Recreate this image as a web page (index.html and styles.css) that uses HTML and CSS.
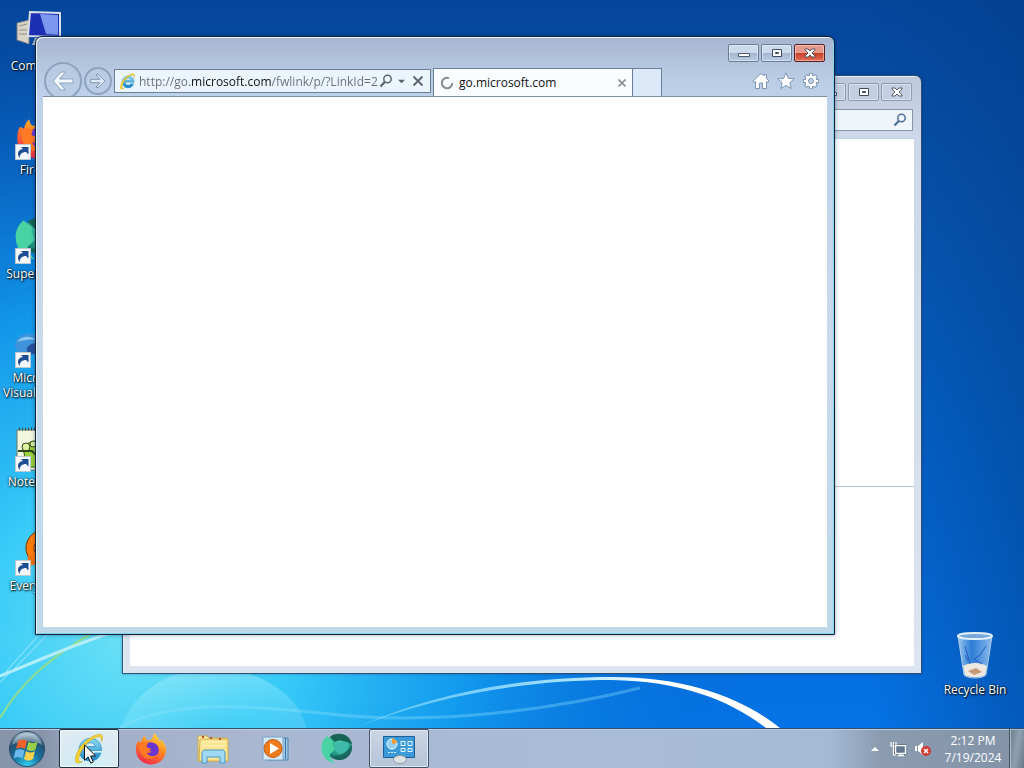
FILE: index.html
```
<!DOCTYPE html>
<html lang="en">
<head>
    <meta charset="UTF-8">
    <meta name="viewport" content="width=device-width, initial-scale=1.0">
    <title>Desktop</title>
    <link rel="stylesheet" href="styles.css">
</head>
<body>

<!-- Shared icons and gradients -->
<svg class="defs" width="0" height="0" aria-hidden="true">
    <defs>
        <linearGradient id="ie-blue" x1="0" y1="0" x2="0" y2="1">
            <stop offset="0" stop-color="#8fdcf6"/>
            <stop offset="1" stop-color="#1781c4"/>
        </linearGradient>
        <linearGradient id="fox-fire" x1="0.8" y1="0" x2="0.3" y2="1">
            <stop offset="0" stop-color="#ffe14a"/>
            <stop offset="0.45" stop-color="#ff8a1f"/>
            <stop offset="1" stop-color="#f0284f"/>
        </linearGradient>
        <radialGradient id="teal" cx="0.5" cy="0.35" r="0.7">
            <stop offset="0" stop-color="#4fd8b4"/>
            <stop offset="1" stop-color="#0b7065"/>
        </radialGradient>
        <radialGradient id="orb" cx="0.5" cy="1" r="0.95">
            <stop offset="0" stop-color="#33d4f4"/>
            <stop offset="0.45" stop-color="#17719f"/>
            <stop offset="0.8" stop-color="#24506f"/>
            <stop offset="1" stop-color="#9fb9c9"/>
        </radialGradient>
        <linearGradient id="folder" x1="0" y1="0" x2="0" y2="1">
            <stop offset="0" stop-color="#fdf3b4"/>
            <stop offset="1" stop-color="#eccf6a"/>
        </linearGradient>
        <linearGradient id="glass" x1="0" y1="0" x2="1" y2="0">
            <stop offset="0" stop-color="#bcdcf5" stop-opacity="0.85"/>
            <stop offset="0.4" stop-color="#4c93e6" stop-opacity="0.6"/>
            <stop offset="1" stop-color="#b3d6f6" stop-opacity="0.8"/>
        </linearGradient>
    </defs>
    <symbol id="ie" viewBox="0 0 32 32">
        <path d="M28.500 17.500H12c.3 3 2 5 5 5 2 0 3.500-1 4.300-2.500h6.600C26.300 25 22.500 28 17.300 28 10.700 28 6 23.500 6 17S10.700 5.500 17.300 5.500C24 5.500 28.800 10 28.500 17.500zM12.200 13.500h10c-.4-2.300-2.200-3.700-4.700-3.700s-4.700 1.500-5.300 3.700z" fill="url(#ie-blue)" stroke="#2a8ec2" stroke-width="0.700"/>
        <path d="M28.500 8.500C30.500 4 30 1.300 26 1.500 20 2 11 8 6 16c-4 6.500-5 12.500-2 14 1.500.5 3.500-.2 5.500-1.500-2 .5-3.500.2-3.700-1.500C5.300 22.500 9.500 15 15 9.500 20 5 25.500 3 27.300 4c1 .7 1 2.200 1.200 4.500z" fill="#f7d22e" stroke="#c79d17" stroke-width="0.500"/>
    </symbol>
    <symbol id="firefox" viewBox="0 0 32 32">
        <path d="M3 8l3 1.500C6.500 6 8 4 10 2.500c0 2 .7 3.500 2 4.500l3 .5C17 6 18.500 4 18.500 0c3 2 5 4.500 6 8l2-1c3.500 3.500 5 7 4.500 11-.7 8-7 13.500-15 13.500S1.500 25.500 1 18C.8 14 1.200 10.500 3 8z" fill="url(#fox-fire)"/>
        <path d="M12 10c3-1.500 7-1 10 2 3 3.500 2 9-1.500 11-4 2-9 .5-10-4 2 1.500 5 1.300 6-.5-2-.3-4-1.500-4.500-3-1.500-.5-2-3 0-5.500z" fill="#6a35cf"/>
        <path d="M4 12c2-4 7-3 9-1.500-1 1-2 3-1 4 2 .3 4 1 4 2-1 1-3 1-4 2.500 0 4 6 5.500 10 2.500-2 5-9 6-13 2.500-4-3-5-8-5-12z" fill="#ff7a22"/>
    </symbol>
    <symbol id="supermium" viewBox="0 0 32 32">
        <circle cx="18" cy="14" r="13" fill="url(#teal)"/>
        <path d="M9 4C13 0 22-.5 27 4c2 2 3.500 4 4 7l-7-2c-3-2-7-2-10 0z" fill="#176455"/>
        <path d="M6 3C1 7-.5 13 1 19c1.500 6 6 10 13 11-4-3-5.500-6-5-9 2-2 4-3 5-5-2-3-3-5-2-8z" fill="#49d3a5"/>
        <path d="M14 15c-1-5 2-7 5-5 3-2 8-2 9 1 0 6-4 10-9 10-3-1-5-3-5-6z" fill="#3fb9a9"/>
        <path d="M9 21c4 3 10 2 14-1 3-2 6-5 8-8 1 8-4 14-11 15-5 0-9-2-11-6z" fill="#17544f" opacity="0.600"/>
    </symbol>
    <symbol id="magnifier" viewBox="0 0 14 14">
        <circle cx="8.500" cy="5" r="3.700" fill="none" stroke="currentColor" stroke-width="1.500"/>
        <path d="M5.700 8L1.500 12.500" stroke="currentColor" stroke-width="2.300"/>
    </symbol>
    <symbol id="shortcut" viewBox="0 0 16 16">
        <path d="M0.500 0.500h15v15h-15z" fill="#f4f8fb" stroke="#b9c8d4"/>
        <path d="M4.500 14C1.500 9 3.500 5.500 8 5L6 3h7.500v7.500L11 8c-4 0-6 2-6.500 6z" fill="#1c4c94"/>
    </symbol>
    <symbol id="win-min" viewBox="0 0 12 10">
        <path d="M0.500 5.500h11v3h-11z" fill="#fff" stroke="#4c5a70"/>
    </symbol>
    <symbol id="win-max" viewBox="0 0 12 10">
        <path d="M1.500 1.500h9v7h-9zM4.500 4.500h3v1h-3z" fill="#fff" stroke="#3e4c63"/>
    </symbol>
    <symbol id="win-close" viewBox="0 0 12 10">
        <path d="M1 1h3l2 2 2-2h3v1L8 5l3 3v1H8L6 7 4 9H1V8l3-3-3-3z" fill="#fff" stroke="#4a4a5a" stroke-width="0.900"/>
    </symbol>
</svg>

<div class="screen">

    <main class="desktop">
        <svg class="wallpaper" viewBox="0 0 1024 728" preserveAspectRatio="none" aria-hidden="true">
            <defs>
                <linearGradient id="sky" x1="0" y1="0" x2="0" y2="1">
                    <stop offset="0" stop-color="#04469b"/>
                    <stop offset="0.300" stop-color="#0654b0"/>
                    <stop offset="0.600" stop-color="#0462c8"/>
                    <stop offset="1" stop-color="#0573e6"/>
                </linearGradient>
                <radialGradient id="glow" gradientUnits="userSpaceOnUse" cx="130" cy="640" r="620">
                    <stop offset="0" stop-color="#6be0f5"/>
                    <stop offset="0.250" stop-color="#38cbf8"/>
                    <stop offset="0.550" stop-color="#129cee" stop-opacity="0.900"/>
                    <stop offset="1" stop-color="#0764cd" stop-opacity="0"/>
                </radialGradient>
                <linearGradient id="edge" x1="0" y1="0" x2="1" y2="0">
                    <stop offset="0.850" stop-color="#033c86" stop-opacity="0"/>
                    <stop offset="1" stop-color="#033c86" stop-opacity="0.450"/>
                </linearGradient>
                <linearGradient id="streak" x1="0" y1="0" x2="1" y2="0">
                    <stop offset="0" stop-color="#9fe6ff" stop-opacity="0.400"/>
                    <stop offset="0.500" stop-color="#a8e4ff"/>
                    <stop offset="0.700" stop-color="#ffffff"/>
                </linearGradient>
                <radialGradient id="bubble" cx="0.5" cy="1" r="1">
                    <stop offset="0" stop-color="#c4f6fb" stop-opacity="0"/>
                    <stop offset="1" stop-color="#c4f6fb" stop-opacity="0.350"/>
                </radialGradient>
            </defs>
            <rect width="1024" height="728" fill="url(#sky)"/>
            <rect width="1024" height="728" fill="url(#glow)"/>
            <rect width="1024" height="728" fill="url(#edge)"/>
            <path d="M120 728C135 690 170 668 215 668C260 670 300 695 306 728z" fill="url(#bubble)"/>
            <path d="M120 728C170 698 260 706 330 714C440 726 560 708 640 688" fill="none" stroke="#8fe3fb" stroke-width="3" opacity="0.350"/>
            <path d="M358 727C440 690 530 677 612 677C690 677 745 700 780 728L766 728C730 700 680 681 612 680C530 680 440 694 358 727z" fill="url(#streak)"/>
            <path d="M0 718C20 684 50 656 98 630" fill="none" stroke="#8fdc8c" stroke-width="2"/>
            <path d="M0 676C40 660 65 648 110 633" fill="none" stroke="#b3eefa" stroke-width="3"/>
            <path d="M0 682C20 664 34 648 48 634M4 674l34-38" fill="none" stroke="#a6e7fa" stroke-width="1"/>
        </svg>

        <ul class="icons">
            <li class="icon">
                <svg class="picture" viewBox="0 0 48 48">
                    <path d="M2 15l12-3v24L2 32z" fill="#d9d5c6" stroke="#777c80"/>
                    <path d="M4 18l8-2M4 22h8M4 26h8" stroke="#8e8d86"/>
                    <path d="M15 4l30 1v24l-32-1z" fill="#1d2fb5" stroke="#d7dfea" stroke-width="2"/>
                    <path d="M25 6l18 1v20l-12-1z" fill="#7b98ee"/>
                    <path d="M20 30h16l2 7H17z" fill="#b9c3c9"/>
                </svg>
                <span>Computer</span>
            </li>
            <li class="icon">
                <svg class="picture" viewBox="0 0 48 48">
                    <use href="#firefox" x="1" y="4" width="43" height="43"/>
                    <use href="#shortcut" x="0" y="32" width="16" height="16"/>
                </svg>
                <span>Firefox</span>
            </li>
            <li class="icon">
                <svg class="picture" viewBox="0 0 48 48">
                    <use href="#supermium" x="0" y="0" width="46" height="46"/>
                    <use href="#shortcut" x="0" y="32" width="16" height="16"/>
                </svg>
                <span>Supermium</span>
            </li>
            <li class="icon">
                <svg class="picture" viewBox="0 0 48 48">
                    <path d="M0 26c0-9 8-13 16-12s14 5 14 12l-14 8-12 2z" fill="#3f93da"/>
                    <path d="M2 22c4-6 14-7 19-2-6-1-12 0-19 2z" fill="#8cc8f0"/>
                    <path d="M12 28c2-4 8-6 14-4v10H12z" fill="#28519c"/>
                    <use href="#shortcut" x="0" y="32" width="16" height="16"/>
                </svg>
                <span>Microsoft Visual Studio</span>
            </li>
            <li class="icon">
                <svg class="picture" viewBox="0 0 48 48">
                    <path d="M2 6h40v40H2z" fill="#f2f7de" stroke="#6e785a"/>
                    <path d="M4 5h36" stroke="#3d4b4e" stroke-width="3" stroke-dasharray="1 2"/>
                    <path d="M8 24c3-5 8-6 12-7l14 6v20H12z" fill="#9bd13b" stroke="#3a5a17" stroke-width="1"/>
                    <circle cx="11" cy="23" r="4" fill="#dff0a0" stroke="#34491c" stroke-width="1"/>
                    <circle cx="18" cy="20" r="3" fill="#dff0a0" stroke="#34491c" stroke-width="1"/>
                    <path d="M3 27h14l4 4" fill="none" stroke="#2d451b" stroke-width="2"/>
                    <use href="#shortcut" x="0" y="32" width="16" height="16"/>
                </svg>
                <span>Notepad++</span>
            </li>
            <li class="icon">
                <svg class="picture" viewBox="0 0 48 48">
                    <circle cx="29" cy="20" r="18" fill="#ff7d0a" stroke="#7a3506" stroke-width="1"/>
                    <path d="M14 27l-4 12 12-3z" fill="#f3700a"/>
                    <circle cx="29" cy="20" r="10" fill="#ffe1b8" stroke="#7a3506"/>
                    <use href="#shortcut" x="0" y="32" width="16" height="16"/>
                </svg>
                <span>Everything</span>
            </li>
            <li class="icon bin">
                <svg class="picture" viewBox="0 0 48 48">
                    <path d="M7 4l6 39c4 4 18 4 22 0l6-39z" fill="url(#glass)" stroke="#a9c9e8"/>
                    <path d="M12 34c6-4 18-4 24 0l-2 9c-4 3-16 3-20 0z" fill="#eee9e0"/>
                    <path d="M17 39l8-3 6 4-8 3z" fill="#c99a78"/>
                    <path d="M14 14l5 18M35 14l-6 9-6 4 8 5M17 29l-3-6" fill="none" stroke="#2459bd" stroke-width="1"/>
                    <ellipse cx="24" cy="4" rx="17" ry="3" fill="#77a7dc" stroke="#e2f0fa" stroke-width="2"/>
                </svg>
                <span>Recycle Bin</span>
            </li>
        </ul>

        <!-- Background window -->
        <section class="window back-window" aria-label="Control Panel">
            <div class="caption">
                <button type="button" class="win-btn" aria-label="Minimize"><svg><use href="#win-min"/></svg></button>
                <button type="button" class="win-btn" aria-label="Maximize"><svg><use href="#win-max"/></svg></button>
                <button type="button" class="win-btn" aria-label="Close"><svg><use href="#win-close"/></svg></button>
            </div>
            <div class="search-row">
                <div class="search">
                    <input type="text" aria-label="Search">
                    <svg><use href="#magnifier"/></svg>
                </div>
            </div>
            <div class="client panes">
                <div class="pane-top"></div>
                <div class="pane-bottom"></div>
            </div>
        </section>

        <!-- Browser window -->
        <section class="window browser" aria-label="Browser">
            <div class="caption">
                <button type="button" class="win-btn" aria-label="Minimize"><svg><use href="#win-min"/></svg></button>
                <button type="button" class="win-btn" aria-label="Maximize"><svg><use href="#win-max"/></svg></button>
                <button type="button" class="win-btn close" aria-label="Close"><svg><use href="#win-close"/></svg></button>
            </div>
            <div class="toolbar">
                <button type="button" class="round back" aria-label="Back">
                    <svg viewBox="0 0 24 24"><path d="M10 3h4.500L8.500 10H22v4H8.500l6 7H10L2 12z" fill="#f3f8fd" stroke="#8da3bf"/></svg>
                </button>
                <button type="button" class="round forward" aria-label="Forward">
                    <svg viewBox="0 0 24 24"><path d="M13 2.500H9L15 9.500H1v5h14l-6 7h4L22.500 12z" fill="#dfe9f5" stroke="#8198b6" stroke-width="1.500"/></svg>
                </button>
                <div class="address">
                    <svg class="site"><use href="#ie"/></svg>
                    <input type="text" class="url" aria-label="Address" value="http://go.microsoft.com/fwlink/p/?LinkId=2">
                    <button type="button" class="plain" aria-label="Search"><svg class="find"><use href="#magnifier"/></svg></button>
                    <button type="button" class="plain drop" aria-label="Show history"><svg viewBox="0 0 8 5"><path d="M0 0.500h8L4 4.500z" fill="#5d6570"/></svg></button>
                    <button type="button" class="plain stop" aria-label="Stop"><svg viewBox="0 0 12 12"><path d="M1.500 1.500l9 9M10.500 1.500l-9 9" stroke="#5c636c" stroke-width="1.800"/></svg></button>
                </div>
                <div class="tabs">
                    <div class="tab">
                        <svg class="spinner" viewBox="0 0 14 14"><path d="M9 2.200A5.200 5.200 0 1 0 12.200 7" fill="none" stroke="#858b91" stroke-width="2"/></svg>
                        <span>go.microsoft.com</span>
                        <button type="button" class="plain" aria-label="Close tab"><svg class="tab-x" viewBox="0 0 8 8"><path d="M0.500 0.500l7 7M7.500 0.500l-7 7" stroke="#8b8f94" stroke-width="1.700"/></svg></button>
                    </div>
                    <button type="button" class="new-tab" aria-label="New tab"></button>
                </div>
                <div class="tools">
                    <button type="button" class="plain" aria-label="Home">
                        <svg viewBox="0 0 18 18"><path d="M9 1.500L12 4V2.500h2.500V6.500L17 9l-1 1.500-1.500-1V16.500h-4V11h-3v5.500h-4V9.500L2 10.500 1 9z" fill="#fff" stroke="#7e95b2"/></svg>
                    </button>
                    <button type="button" class="plain" aria-label="Favorites">
                        <svg viewBox="0 0 18 18"><path d="M9 0.800l2.300 5.500 6 .5-4.500 3.900 1.400 5.800L9 13.400l-5.200 3.100 1.400-5.800L0.700 6.800l6-.5z" fill="#fff" stroke="#7e95b2"/></svg>
                    </button>
                    <button type="button" class="plain" aria-label="Tools">
                        <svg viewBox="0 0 18 18">
                            <path d="M9 1v16M1 9h16M3.300 3.300l11.400 11.400M14.700 3.300L3.300 14.700" stroke="#7e95b2" stroke-width="4"/>
                            <circle cx="9" cy="9" r="6" fill="#fff" stroke="#7e95b2"/>
                            <path d="M9 1.800v14.400M1.800 9h14.400M3.900 3.900l10.200 10.200M14.100 3.900L3.900 14.100" stroke="#fff" stroke-width="2"/>
                            <circle cx="9" cy="9" r="2.500" fill="#c0d1e6" stroke="#7e95b2"/>
                        </svg>
                    </button>
                </div>
            </div>
            <div class="client"></div>
        </section>
    </main>

    <footer class="taskbar">
        <button type="button" class="start" aria-label="Start">
            <svg viewBox="0 0 38 38">
                <circle cx="19" cy="19" r="17.500" fill="url(#orb)" stroke="#2c4a66"/>
                <path d="M4 15a15.500 15.500 0 0 1 30 0c-8-5-22-5-30 0z" fill="#fff" opacity="0.350"/>
                <path d="M10 11c3-2 6-2 9 0l-2 8c-3-2-6-2-9 0z" fill="#f0622d"/>
                <path d="M20.500 11.500c3 2 6 2 9 0l-2 8c-3 2-6 2-9 0z" fill="#98cf47"/>
                <path d="M7.500 20.500c3-2 6-2 9 0l-2 8c-3-2-6-2-9 0z" fill="#69b8ec"/>
                <path d="M18 21c3 2 6 2 9 0l-2 8c-3 2-6 2-9 0z" fill="#fcd24c"/>
            </svg>
        </button>
        <nav class="tasks" aria-label="Taskbar">
            <button type="button" class="task hot" aria-label="Internet Explorer"><svg><use href="#ie"/></svg></button>
            <button type="button" class="task" aria-label="Firefox"><svg><use href="#firefox"/></svg></button>
            <button type="button" class="task" aria-label="Explorer">
                <svg viewBox="0 0 32 32">
                    <path d="M1 3h9l2 2h18v23H1z" fill="url(#folder)" stroke="#c9a94e"/>
                    <path d="M3 6h28v22H2z" fill="#f9e48f" stroke="#d0ae50"/>
                    <path d="M5 4h2M13 5h2M22 6h2" stroke="#b8502e" stroke-width="2"/>
                    <path d="M4 9h24M4 13h24" stroke="#fff6c8"/>
                    <path d="M5 30V20c0-2 1-3 3-3h17c2 0 3 1 3 3v10h-5v-6H10v6z" fill="#9fd9f3" stroke="#4c96c8"/>
                </svg>
            </button>
            <button type="button" class="task" aria-label="Media Player">
                <svg viewBox="0 0 32 32">
                    <path d="M8 5h21v22H8z" fill="#9fc7e6" stroke="#4f81ac"/>
                    <path d="M4 4h20v23H4z" fill="#d5e9f6" stroke="#7ba4c6"/>
                    <path d="M26.500 5v21" stroke="#3a73a8"/>
                    <circle cx="14" cy="15.500" r="9" fill="#ef7c1c" stroke="#c45b10"/>
                    <path d="M11 10l9 5.500-9 5.500z" fill="#fff"/>
                </svg>
            </button>
            <button type="button" class="task" aria-label="Supermium"><svg><use href="#supermium"/></svg></button>
            <button type="button" class="task open" aria-label="Control Panel">
                <svg viewBox="0 0 32 32">
                    <path d="M0.500 3.500h31v21h-31z" fill="#3c9bd6" stroke="#1c5f98"/>
                    <circle cx="9" cy="11" r="5" fill="#8fd0f2" stroke="#fff"/>
                    <path d="M9 11V5.500A5.500 5.500 0 0 1 14 10z" fill="#f39b35"/>
                    <path d="M18 8.500h4v4h-4zM25 8.500h4v4h-4zM18 15.500h4v3h-4zM25 15.500h4v3h-4z" fill="none" stroke="#e4f5fd"/>
                    <path d="M5 19.500h8" stroke="#d9f0fb" stroke-dasharray="2 1"/>
                    <ellipse cx="17" cy="26.500" rx="6.500" ry="4" fill="#dfe2e2" stroke="#8b979e"/>
                </svg>
            </button>
        </nav>
        <div class="tray">
            <button type="button" class="plain" aria-label="Show hidden icons"><svg class="up" viewBox="0 0 8 4"><path d="M0 4l4-4 4 4z" fill="#fff"/></svg></button>
            <svg class="tray-icon" viewBox="0 0 16 16">
                <path d="M5.500 4.500h10v8h-10z" fill="#64788e" stroke="#3d4c5c" stroke-width="3"/>
                <path d="M5.500 4.500h10v8h-10zM8 14.500h6M10.500 12.500v2" fill="#64788e" stroke="#fff" stroke-width="1.400"/>
                <path d="M1 1v4h5V1M3.500 1v3M3.500 5v9h3" fill="none" stroke="#fff" stroke-width="1.200"/>
            </svg>
            <svg class="tray-icon" viewBox="0 0 16 16">
                <path d="M0 5h2v5H0zM3 5l5-4v13l-5-4z" fill="#fff"/>
                <circle cx="11" cy="10" r="5" fill="#d33a35"/>
                <path d="M9 8l4 4M13 8l-4 4" stroke="#fff" stroke-width="1.600"/>
            </svg>
        </div>
        <div class="clock">
            <span>2:12 PM</span>
            <span>7/19/2024</span>
        </div>
        <button type="button" class="show-desktop" aria-label="Show desktop"></button>
    </footer>

    <svg class="cursor" viewBox="0 0 12 20" aria-hidden="true">
        <path d="M0.500 0.800v15.500l3.600-3.400 2.700 6.200 2.500-1.100-2.700-6h5z" fill="#fff" stroke="#111"/>
    </svg>
</div>

</body>
</html>
```
FILE: styles.css
```
* {
    box-sizing: border-box;
}

body {
    margin: 0;
    font-family: "Open Sans", "Noto Sans", sans-serif;
    font-size: 12px;
    line-height: 15px;
    color: #111;
    overflow: hidden;
}

button {
    margin: 0;
    padding: 0;
    border: none;
    background: none;
    font: inherit;
}

svg {
    display: block;
}

.defs {
    position: absolute;
}

.screen {
    position: relative;
    display: flex;
    flex-direction: column;
    height: 100vh;
}

/* Desktop */
.desktop {
    position: relative;
    flex: 1;
    min-height: 0;
    overflow: hidden;
}

.wallpaper {
    position: absolute;
    width: 100%;
    height: 100%;
}

.icons {
    position: relative;
    display: grid;
    grid-template-columns: 76px 76px;
    grid-auto-rows: 104px;
    justify-content: space-between;
    margin: 0;
    padding: 0 11px 0 1px;
    list-style: none;
}

.icon {
    grid-column: 1;
    display: flex;
    flex-direction: column;
    align-items: center;
    gap: 2px;
    padding-top: 8px;
    color: #fff;
    text-align: center;
    text-shadow: 1px 1px 2px #000, 0 0 2px #000;
}

.picture {
    width: 48px;
    height: 48px;
    flex: none;
}

.bin {
    grid-column: 2;
    grid-row: 7;
    white-space: nowrap;
}

/* Windows */
.window {
    position: absolute;
    display: flex;
    flex-direction: column;
    padding: 0 7px 7px;
    border: 1px solid #10233a;
    border-radius: 7px 7px 0 0;
}

.browser {
    inset: 36px 189px 93px 35px;
    background: linear-gradient(#a7b5d0, #b9cce4 40px, #bdd1ea 60px, #cbdaea 300px, #bcd9ea);
    box-shadow: inset 1px 1px #e8f4fb, inset -1px -1px #7fd5ec, 0 0 4px rgba(0, 20, 60, 0.4);
}

.back-window {
    inset: 75px 102px 54px 122px;
    background: linear-gradient(#bec9dc, #ccd8e8 60px, #dce5ef);
    border-color: #2b4f78;
    box-shadow: inset 1px 1px #e6eef6, 0 0 3px rgba(0, 20, 60, 0.3);
}

.caption {
    display: flex;
    justify-content: flex-end;
    gap: 2px;
    padding: 7px 2px 0 0;
}

.win-btn {
    display: flex;
    align-items: center;
    justify-content: center;
    width: 31px;
    height: 18px;
    border: 1px solid #6c7d98;
    border-radius: 2px;
    background: linear-gradient(#cddaea 50%, #a5b6ce 50%, #bacde3);
    box-shadow: inset 0 0 0 1px rgba(255, 255, 255, 0.4);
}

.win-btn svg {
    width: 12px;
    height: 10px;
}

.back-window .win-btn {
    border-color: #8d9bb2;
    background: #c3cfe0;
}

.win-btn.close {
    border-color: #5b1d24;
    background: linear-gradient(#e59a8c 50%, #c73c29 50%, #df7257);
}

.toolbar {
    display: flex;
    align-items: center;
    height: 34px;
    padding: 4px 7px 0 1px;
    overflow: hidden;
}

.round {
    display: flex;
    flex: none;
    align-items: center;
    justify-content: center;
    border: 2px solid #8ea3c0;
    border-radius: 50%;
    background: rgba(184, 203, 226, 0.6);
}

.back {
    width: 38px;
    height: 38px;
}

.back svg {
    width: 24px;
    height: 24px;
}

.forward {
    width: 28px;
    height: 28px;
    margin: 0 2px;
}

.forward svg {
    width: 16px;
    height: 16px;
}

.address {
    display: flex;
    flex: 0 1 317px;
    align-items: center;
    height: 24px;
    padding: 0 6px 0 4px;
    border: 1px solid #6c7f9a;
    background: #edf5fc;
}

.site {
    width: 17px;
    height: 17px;
    flex: none;
    margin-right: 3px;
}

/* The host name is darker than the rest of the address */
.url {
    flex: 1;
    min-width: 0;
    padding: 0;
    border: none;
    outline: none;
    font: inherit;
    color: transparent;
    background: linear-gradient(90deg, #686d75 51px, #111 51px, #111 132px, #686d75 132px);
    -webkit-background-clip: text;
    background-clip: text;
}

.find {
    width: 14px;
    height: 14px;
    color: #5f666e;
}

.drop svg {
    width: 7px;
    height: 5px;
    margin: 0 7px 0 5px;
}

.stop svg {
    width: 12px;
    height: 12px;
}

.tabs {
    display: flex;
    flex: none;
    align-self: flex-end;
    height: 28px;
    margin-left: 2px;
}

.tab {
    display: flex;
    align-items: center;
    width: 200px;
    padding: 0 6px 0 6px;
    border: 1px solid #6c7f9a;
    border-bottom: none;
    background: #fafdff;
}

.tab span {
    flex: 1;
    margin-left: 5px;
}

.spinner {
    width: 14px;
    height: 14px;
}

.tab-x {
    width: 8px;
    height: 8px;
}

.new-tab {
    width: 29px;
    border: 1px solid #6c7f9a;
    border-width: 1px 1px 0 0;
    background: #dce9f8;
}

.tools {
    display: flex;
    gap: 7px;
    margin-left: auto;
}

.tools svg {
    width: 18px;
    height: 18px;
}

.client {
    flex: 1;
    background: #fff;
}

.browser .client {
    border-top: 1px solid #7f8ea3;
}

.search-row {
    display: flex;
    justify-content: flex-end;
    padding: 8px 1px 7px;
}

.search {
    display: flex;
    align-items: center;
    width: 200px;
    height: 22px;
    padding-right: 5px;
    border: 1px solid #8396ae;
    background: #f0f5fb;
}

.search input {
    flex: 1;
    min-width: 0;
    border: none;
    outline: none;
    background: none;
}

.search svg {
    width: 14px;
    height: 14px;
    color: #4c7299;
}

.panes {
    display: flex;
    flex-direction: column;
    border-top: 1px solid #bcd5e6;
}

.pane-top {
    flex: 1;
    border-bottom: 1px solid #b5c9d5;
}

.pane-bottom {
    height: 34%;
}

/* Taskbar */
.taskbar {
    display: flex;
    align-items: stretch;
    height: 40px;
    border-top: 1px solid #34526f;
    background: linear-gradient(90deg, #8795ab 4%, #a0aec8 9%, #a9b7d1 25%, #a9bcd8 60%, #a4bad5 81%, #8b9bb0 86%, #8393a7);
    box-shadow: inset 0 1px #bccde1;
}

.start {
    width: 38px;
    margin: 0 13px 0 8px;
}

.start svg {
    width: 38px;
    height: 38px;
}

.tasks {
    display: flex;
    gap: 2px;
    flex: 1;
}

.task {
    display: flex;
    align-items: center;
    justify-content: center;
    width: 60px;
    border: 1px solid transparent;
    border-radius: 2px;
}

.task svg {
    width: 32px;
    height: 32px;
}

.hot {
    border-color: #1d2f42;
    background: radial-gradient(circle at 50% 100%, #cdf5fb, #d8e9f2 60%, #e3edf4);
    box-shadow: inset 0 0 0 1px #f5fbfd;
}

.open {
    border-color: #42536c;
    background: linear-gradient(#cbd5e4, #b6c4d8);
    box-shadow: inset 0 0 0 1px #dfe7f0;
}

.tray {
    display: flex;
    align-items: center;
    gap: 9px;
}

.up {
    width: 8px;
    height: 4px;
    margin-right: 2px;
}

.tray-icon {
    width: 16px;
    height: 16px;
}

.clock {
    display: flex;
    flex-direction: column;
    justify-content: center;
    width: 72px;
    margin-left: 6px;
    line-height: 17px;
    color: #fff;
    text-align: center;
}

.show-desktop {
    width: 15px;
    border: 1px solid #465868;
    border-width: 0 0 0 1px;
    background: linear-gradient(100deg, #6c7c8d, #8fa0b1 50%, #66788a);
    box-shadow: inset 1px 1px #a9b8c7;
}

.cursor {
    position: absolute;
    left: 84px;
    bottom: 4px;
    width: 12px;
    height: 20px;
}
```
